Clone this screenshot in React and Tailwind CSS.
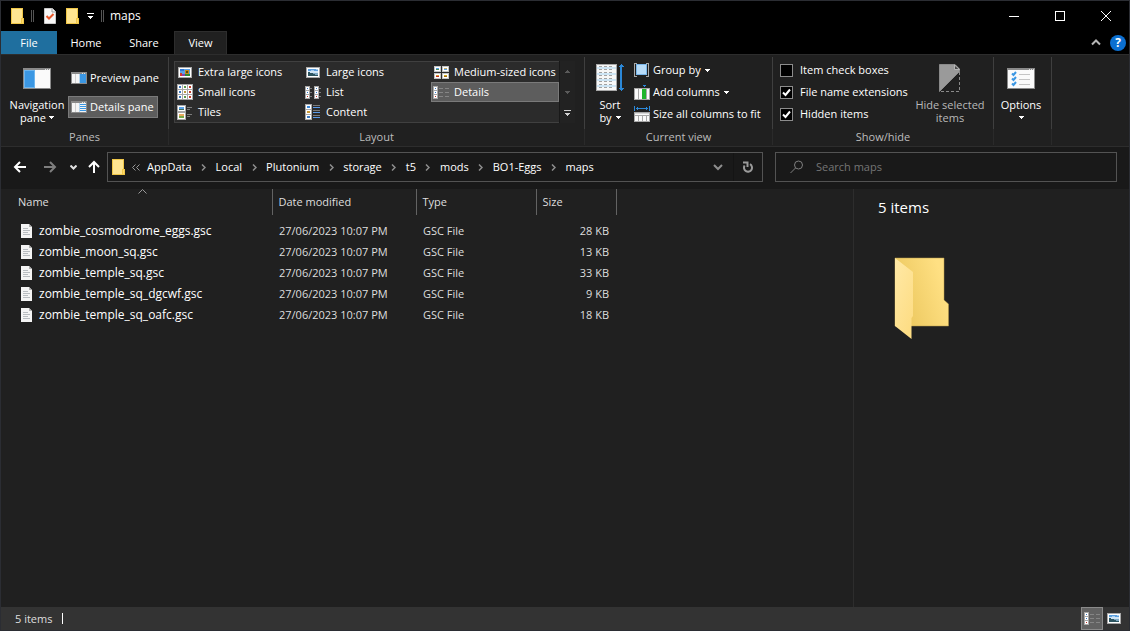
import React, { useState } from 'react'

const files = [
  { name: 'zombie_cosmodrome_eggs.gsc', date: '27/06/2023 10:07 PM', type: 'GSC File', size: '28 KB' },
  { name: 'zombie_moon_sq.gsc', date: '27/06/2023 10:07 PM', type: 'GSC File', size: '13 KB' },
  { name: 'zombie_temple_sq.gsc', date: '27/06/2023 10:07 PM', type: 'GSC File', size: '33 KB' },
  { name: 'zombie_temple_sq_dgcwf.gsc', date: '27/06/2023 10:07 PM', type: 'GSC File', size: '9 KB' },
  { name: 'zombie_temple_sq_oafc.gsc', date: '27/06/2023 10:07 PM', type: 'GSC File', size: '18 KB' },
]

const crumbs = ['AppData', 'Local', 'Plutonium', 'storage', 't5', 'mods', 'BO1-Eggs', 'maps']

/* ---------- icons ---------- */

function Icon({ w = 16, h = 16, crisp = true, className = '', children }) {
  return (
    <svg
      width={w}
      height={h}
      viewBox={`0 0 ${w} ${h}`}
      fill="none"
      shapeRendering={crisp ? 'crispEdges' : 'auto'}
      className={`shrink-0 ${className}`}
      aria-hidden="true"
    >
      {children}
    </svg>
  )
}

function FolderIcon() {
  return (
    <Icon w={13} h={16}>
      <rect x="0" y="0" width="12" height="16" fill="#ffe591" />
      <path d="M0.5 0v15.5H12.5V10.5H10.5V15M0 0.5H11.5V10" stroke="#f0c748" />
      <rect x="11" y="11" width="1" height="4" fill="#ffd869" />
    </Icon>
  )
}

function PropertiesIcon() {
  return (
    <Icon w={12} h={16} crisp={false}>
      <path d="M0.5 0.5H8.5L11.5 3.5V15.5H0.5Z" fill="#f7f7f7" stroke="#c9c9c9" />
      <path d="M8 0.5V4H11.5" stroke="#9a9a9a" />
      <path d="M2.5 8L5 10.5L9.5 6" stroke="#e8572a" strokeWidth="2" />
    </Icon>
  )
}

function NavPaneIcon() {
  return (
    <Icon w={28} h={21}>
      <rect x="0.5" y="0.5" width="27" height="20" fill="#fafafa" stroke="#8a8a8a" />
      <rect x="1" y="1" width="26" height="1" fill="#8a8a8a" />
      <path d="M22 1.5H23M24 1.5H25M26 1.5H27" stroke="#e0e0e0" />
      <rect x="1" y="2" width="11" height="18" fill="#3b97e3" />
      <rect x="1.5" y="2.5" width="10" height="17" stroke="#6db5ee" />
    </Icon>
  )
}

function PaneIcon({ details }) {
  return (
    <Icon w={16} h={12}>
      <rect x="0.5" y="0.5" width="15" height="11" fill="#f5f5f5" stroke="#8a8a8a" />
      <rect x="1" y="1" width="14" height="1" fill="#8a8a8a" />
      <path d="M11 1.5H12M13 1.5H14" stroke="#e0e0e0" />
      <rect x="4" y="2" width="1" height="9" fill="#d0d0d0" />
      <rect x="9" y="2" width="6" height="9" fill={details ? '#f5f5f5' : '#3b97e3'} />
      {details && <path d="M9 3.5H15M9 5.5H15M9 7.5H15M9 9.5H15" stroke="#3b97e3" />}
      <rect x="8" y="2" width="1" height="9" fill="#b5d6f0" />
    </Icon>
  )
}

function PhotoIcon({ colorful }) {
  return (
    <Icon w={14} h={11}>
      <rect x="0.5" y="0.5" width="13" height="10" fill="#ffffff" stroke="#a8a8a8" />
      {colorful ? (
        <>
          <rect x="2" y="2" width="10" height="7" fill="#5aa2e8" />
          <rect x="2" y="2" width="4" height="2" fill="#2f78d8" />
          <rect x="7" y="3" width="4" height="4" fill="#c98a1c" />
          <rect x="8" y="4" width="2" height="2" fill="#5a4a10" />
          <rect x="2" y="6" width="2" height="3" fill="#d43a2a" />
          <rect x="4" y="7" width="3" height="2" fill="#8a3fb0" />
          <rect x="7" y="7" width="5" height="2" fill="#2e8a35" />
        </>
      ) : (
        <>
          <rect x="2" y="2" width="10" height="2" fill="#5b9fdf" />
          <path d="M5 3.5H8M10 2.5H12" stroke="#a9cff0" />
          <rect x="2" y="4" width="10" height="2" fill="#cfe4f5" />
          <rect x="2" y="6" width="10" height="2" fill="#7fa9c4" />
          <path d="M2 5H4V6H7V7H9V8H12V9H2Z" fill="#2d5560" />
        </>
      )}
    </Icon>
  )
}

function SmallIconsIcon() {
  const colors = ['#3b78c0', '#5c9a4a', '#c03a2a', '#3b78c0', '#b89a40', '#c03a2a', '#3b78c0', '#5c9a4a', '#c03a2a']
  return (
    <Icon>
      <rect width="16" height="16" fill="#a8a8a8" />
      {colors.map((c, i) => {
        const x = 1 + (i % 3) * 5
        const y = 1 + Math.floor(i / 3) * 5
        return (
          <g key={i}>
            <rect x={x} y={y} width="4" height="4" fill="#fff" />
            <rect x={x + 1} y={y + 1} width="2" height="2" fill={c} />
          </g>
        )
      })}
    </Icon>
  )
}

function MediumIconsIcon() {
  const cells = [
    [0, 0, '#5aa2e8', '#4e8c5a'],
    [8, 0, '#c7b06a', '#5aa2e8'],
    [0, 7, '#e0a030', '#c0281e'],
    [8, 7, '#d8b020', '#a06a14'],
  ]
  return (
    <Icon w={15} h={13}>
      {cells.map(([x, y, a, b]) => (
        <g key={`${x}-${y}`}>
          <rect x={x + 0.5} y={y + 0.5} width="6" height="5" fill="#fff" stroke="#c4c4c4" />
          <rect x={x + 2} y={y + 2} width="3" height="1" fill={a} />
          <rect x={x + 2} y={y + 3} width="3" height="1" fill={b} />
        </g>
      ))}
    </Icon>
  )
}

function TilesIcon() {
  return (
    <Icon w={16} h={15}>
      <rect x="0.5" y="0.5" width="8" height="6" fill="#fff" stroke="#a8a8a8" />
      <rect x="2" y="2" width="5" height="2" fill="#5aa2e8" />
      <rect x="2" y="4" width="5" height="1" fill="#3d6b5c" />
      <rect x="0.5" y="7.5" width="8" height="7" fill="#fff" stroke="#a8a8a8" />
      <rect x="2" y="9" width="5" height="2" fill="#e8a860" />
      <rect x="2" y="11" width="5" height="2" fill="#78a848" />
      <path d="M10 2.5H15M10 4.5H13M10 9.5H15M10 11.5H13" stroke="#7c7c7c" />
    </Icon>
  )
}

function Strip({ x }) {
  return (
    <g>
      <rect x={x} y="0" width="5" height="13" fill="#a8a8a8" />
      <rect x={x + 1} y="1" width="3" height="3" fill="#fff" />
      <rect x={x + 1} y="5" width="3" height="3" fill="#fff" />
      <rect x={x + 1} y="9" width="3" height="3" fill="#fff" />
      <rect x={x + 2} y="2" width="1" height="1" fill="#3b78c0" />
      <rect x={x + 2} y="6" width="1" height="1" fill="#2b78d0" />
      <rect x={x + 2} y="10" width="1" height="1" fill="#c0281e" />
    </g>
  )
}

function ListIcon() {
  return (
    <Icon w={16} h={13}>
      <Strip x={0} />
      <Strip x={9} />
      <path d="M5 2.5H7M5 6.5H7M5 10.5H7M14 2.5H16M14 6.5H16M14 10.5H16" stroke="#7c7c7c" />
    </Icon>
  )
}

function DetailsIcon() {
  return (
    <Icon w={16} h={13}>
      <Strip x={0} />
      <path d="M6 2.5H10M12 2.5H16M6 6.5H10M12 6.5H16M6 10.5H10M12 10.5H16" stroke="#858585" />
    </Icon>
  )
}

function ContentIcon() {
  return (
    <Icon w={16} h={16}>
      <rect x="0" y="0" width="7" height="16" fill="#a8a8a8" />
      <path d="M1 3H6M1 8H6M1 13H6" stroke="#fff" strokeWidth="4" />
      <rect x="2" y="2" width="3" height="2" fill="#3b88d8" />
      <rect x="2" y="7" width="3" height="2" fill="#c89838" />
      <rect x="2" y="12" width="3" height="2" fill="#3b78c0" />
      <path d="M8 1.5H15M8 6.5H15M8 11.5H15" stroke="#7c7c7c" />
      <path d="M8 3.5H15M8 8.5H15M8 13.5H15" stroke="#5a9bea" />
    </Icon>
  )
}

function SortIcon() {
  return (
    <Icon w={28} h={28}>
      <rect x="0.5" y="0.5" width="20" height="26" fill="#f7f7f7" stroke="#a8a8a8" />
      <path d="M1 4H20M1 10H20M1 16H20M1 22H20" stroke="#cde5f5" strokeWidth="2" />
      <path
        d="M3 2.5H18M3 5.5H18M3 8.5H18M3 11.5H18M3 14.5H18M3 17.5H18M3 20.5H18M3 23.5H18"
        stroke="#a2a2a2"
        strokeDasharray="3 2"
      />
      <path d="M25 2V25" stroke="#2b88d8" strokeWidth="2" />
      <path d="M22 3H28L25 0ZM22 24H28L25 27Z" fill="#2b88d8" />
    </Icon>
  )
}

function GroupIcon() {
  return (
    <Icon w={15} h={14}>
      <path d="M3 0.5H0.5V13.5H3M12 0.5H14.5V13.5H12" stroke="#a8a8a8" />
      <rect x="2.5" y="1.5" width="10" height="10" fill="#b8dcf8" stroke="#79b6ea" />
    </Icon>
  )
}

function AddColumnsIcon() {
  return (
    <Icon w={16} h={15}>
      <path d="M8 0H13L10.5 2Z" fill="#2b88d8" />
      <rect x="0.5" y="3.5" width="15" height="11" fill="#fafafa" stroke="#a8a8a8" />
      <path d="M4.5 4V14M12.5 4V14" stroke="#a8a8a8" />
      <rect x="8" y="4" width="4" height="10" fill="#1fb52c" />
    </Icon>
  )
}

function SizeColumnsIcon() {
  return (
    <Icon w={16} h={16}>
      <path d="M0.5 0V5M15.5 0V5M2 2.5H14M3.5 1V4M12.5 1V4" stroke="#2b88d8" />
      <rect x="0.5" y="6.5" width="15" height="9" fill="#fafafa" stroke="#a8a8a8" />
      <path d="M1 9.5H15" stroke="#a8a8a8" />
      <path d="M1 7.5H15" stroke="#d8d8d8" />
      <path d="M4.5 9V15M8.5 9V15M12.5 9V15" stroke="#a8a8a8" />
    </Icon>
  )
}

function HideItemsIcon() {
  return (
    <Icon w={22} h={28} crisp={false}>
      <path d="M0.5 0.5H16L20.5 5V7.5L0.5 27.5Z" fill="#9a9a9a" stroke="#8a8a8a" />
      <path d="M15.5 1V5.5H20.5Z" fill="#4a4a4a" stroke="#b5b5b5" />
      <path d="M20.5 8V27.5H1" stroke="#8a8a8a" strokeDasharray="3 2" />
    </Icon>
  )
}

function OptionsIcon() {
  return (
    <Icon w={28} h={21} crisp={false}>
      <rect x="0.5" y="0.5" width="27" height="20" fill="#fafafa" stroke="#8a8a8a" />
      <rect x="1" y="1" width="26" height="1" fill="#8a8a8a" />
      <path d="M22 1.5H23M24 1.5H25M26 1.5H27" stroke="#e0e0e0" />
      <path d="M5 5.5L6.5 7L9 4M5 10.5L6.5 12L9 9M5 15.5L6.5 17L9 14" stroke="#3b97e3" strokeWidth="2" />
      <path d="M12 6.5H23M12 11.5H23M12 16.5H23" stroke="#c4c4c4" />
    </Icon>
  )
}

function Caret({ className = '' }) {
  return (
    <Icon w={5} h={3} className={className}>
      <path d="M0 0H5V1H4V2H3V3H2V2H1V1H0Z" fill="currentColor" />
    </Icon>
  )
}

function FileIcon() {
  return (
    <Icon w={11} h={14} crisp={false}>
      <path d="M0 0H8L11 3V14H0Z" fill="#f4f4f4" />
      <path d="M8 0V3H11Z" fill="#b0b0b0" />
      <path d="M2 4.5H7M2 6.5H9M2 8.5H7M2 10.5H9" stroke="#b8bcc0" />
    </Icon>
  )
}

function OpenFolderIcon() {
  return (
    <Icon w={56} h={84} crisp={false}>
      <defs>
        <linearGradient id="back" x1="0" y1="1" x2="1" y2="0.6">
          <stop offset="0.2" stopColor="#ecc85f" />
          <stop offset="1" stopColor="#ffe083" />
        </linearGradient>
        <linearGradient id="front" x1="0" y1="0" x2="0.6" y2="1">
          <stop offset="0" stopColor="#ffe9a6" />
          <stop offset="1" stopColor="#fddd85" />
        </linearGradient>
      </defs>
      <path d="M1 1H50V43L54.5 47V69H1Z" fill="url(#back)" stroke="#b79a4a" strokeWidth="0.5" />
      <path d="M1 1L19 15V59L17.5 61V82L1 69Z" fill="url(#front)" />
    </Icon>
  )
}

/* ---------- ribbon ---------- */

function Group({ label, className = '', children }) {
  return (
    <section className={`flex flex-col h-[88px] ${className}`}>
      <div className="flex-1 flex border-r border-[#3f3f3f]">{children}</div>
      <div className="h-4 text-center leading-4 text-[#bdbdbd] border-r border-[#2a2a2a]">{label}</div>
    </section>
  )
}

function BigButton({ icon, className = '', children }) {
  return (
    <button className={`flex flex-col items-center leading-[13px] ${className}`}>
      <span className="h-[34px] flex items-center mb-[3px]">{icon}</span>
      {children}
    </button>
  )
}

function RibbonRow({ icon, caret, children }) {
  return (
    <button className="flex items-center h-[22px] whitespace-nowrap">
      <span className="w-[19px]">{icon}</span>
      {children}
      {caret && <Caret className="ml-1" />}
    </button>
  )
}

function CheckRow({ label, initial }) {
  const [checked, setChecked] = useState(initial)
  return (
    <label className="flex items-center h-[22px] whitespace-nowrap">
      <span className="grid mr-[7px]">
        <input
          type="checkbox"
          checked={checked}
          onChange={(e) => setChecked(e.target.checked)}
          className="appearance-none col-start-1 row-start-1 w-[13px] h-[13px] bg-black border border-[#8c8c8c]"
        />
        {checked && (
          <Icon w={13} h={13} crisp={false} className="col-start-1 row-start-1 pointer-events-none">
            <path d="M3 6.5L5.5 9L10 3.5" stroke="#fff" strokeWidth="2" />
          </Icon>
        )}
      </span>
      {label}
    </label>
  )
}

const layouts = [
  { label: 'Extra large icons', icon: <PhotoIcon colorful /> },
  { label: 'Large icons', icon: <PhotoIcon /> },
  { label: 'Medium-sized icons', icon: <MediumIconsIcon /> },
  { label: 'Small icons', icon: <SmallIconsIcon /> },
  { label: 'List', icon: <ListIcon /> },
  { label: 'Details', icon: <DetailsIcon /> },
  { label: 'Tiles', icon: <TilesIcon /> },
  { label: 'Content', icon: <ContentIcon /> },
]

function Ribbon() {
  const [layout, setLayout] = useState('Details')

  return (
    <div className="flex bg-[#202020] border-y border-[#2d2d2d] h-[93px] pt-[2px] overflow-hidden">
      <Group label="Panes" className="w-[168px]">
        <BigButton icon={<NavPaneIcon />} className="w-[58px] ml-[7px] pt-1">
          <span>Navigation</span>
          <span className="flex items-center gap-[3px]">pane<Caret /></span>
        </BigButton>
        <div className="flex flex-col gap-[7px] pt-[10px] ml-[2px]">
          <button className="flex items-center gap-[3px] h-[22px] w-[90px] border border-transparent px-[2px] whitespace-nowrap">
            <PaneIcon />
            Preview pane
          </button>
          <button className="flex items-center gap-[3px] h-[22px] w-[90px] border border-[#7a7a7a] bg-[#5d5d5d] px-[2px] whitespace-nowrap">
            <PaneIcon details />
            Details pane
          </button>
        </div>
      </Group>

      <Group label="Layout" className="w-[416px]">
        <div className="flex mt-1 ml-[5px] h-[62px] w-[401px]">
          <div className="grid grid-cols-3 grid-rows-3 w-[385px] bg-[#2b2b2b] border border-r-0 border-[#404040]">
            {layouts.map((l) => (
              <button
                key={l.label}
                onClick={() => setLayout(l.label)}
                className={`flex items-center h-5 border pl-[1px] whitespace-nowrap ${
                  l.label === layout ? 'bg-[#5d5d5d] border-[#7a7a7a]' : 'border-transparent'
                }`}
              >
                <span className="w-4 mr-[5px] flex justify-center">{l.icon}</span>
                {l.label}
              </button>
            ))}
          </div>
          <div className="flex flex-col w-4 bg-[#222222] border-l border-[#191919]">
            <button aria-label="Scroll up" className="flex-1 flex items-center justify-center text-[#5a5a5a]">
              <Caret className="rotate-180" />
            </button>
            <button aria-label="Scroll down" className="flex-1 flex items-center justify-center text-[#5a5a5a]">
              <Caret />
            </button>
            <button aria-label="More layouts" className="flex-1 flex flex-col gap-[2px] items-center justify-center text-[#d0d0d0]">
              <span className="w-[7px] h-px bg-[#d0d0d0]" />
              <Caret />
            </button>
          </div>
        </div>
      </Group>

      <Group label="Current view" className="w-[188px]">
        <BigButton icon={<SortIcon />} className="w-[48px] ml-[1px] pt-1">
          <span>Sort</span>
          <span className="flex items-center gap-1">by<Caret /></span>
        </BigButton>
        <div className="flex flex-col pt-[2px]">
          <RibbonRow icon={<GroupIcon />} caret>Group by</RibbonRow>
          <RibbonRow icon={<AddColumnsIcon />} caret>Add columns</RibbonRow>
          <RibbonRow icon={<SizeColumnsIcon />}>Size all columns to fit</RibbonRow>
        </div>
      </Group>

      <Group label="Show/hide" className="w-[221px]">
        <div className="flex flex-col pt-[2px] ml-[7px] w-[130px]">
          <CheckRow label="Item check boxes" initial={false} />
          <CheckRow label="File name extensions" initial={true} />
          <CheckRow label="Hidden items" initial={true} />
        </div>
        <BigButton icon={<HideItemsIcon />} className="w-20 pt-1 text-[#b8b8b8]">
          <span className="whitespace-nowrap">Hide selected</span>
          <span>items</span>
        </BigButton>
      </Group>

      <Group label="" className="w-[58px]">
        <BigButton icon={<OptionsIcon />} className="w-[54px] pt-1">
          <span>Options</span>
          <span className="h-[13px] flex items-center"><Caret /></span>
        </BigButton>
      </Group>
    </div>
  )
}

/* ---------- window ---------- */

function TitleBar() {
  return (
    <header className="flex items-center h-[30px] bg-black pl-[10px]">
      <FolderIcon />
      <span className="w-[3px] h-3 border-x border-[#555] ml-[7px] mr-[10px]" />
      <button aria-label="Properties"><PropertiesIcon /></button>
      <button aria-label="New folder" className="ml-[10px]"><FolderIcon /></button>
      <button aria-label="Customize toolbar" className="ml-2 flex flex-col items-center gap-[2px]">
        <span className="w-[7px] h-px bg-white" />
        <Caret />
      </button>
      <span className="w-[3px] h-3 border-x border-[#555] ml-[7px] mr-[6px]" />
      <h1 className="text-[12px]">maps</h1>
      <div className="ml-auto flex h-full">
        <button aria-label="Minimize" className="w-[46px] flex items-center justify-center">
          <Icon w={10} h={10}><path d="M0 5.5H10" stroke="#fff" /></Icon>
        </button>
        <button aria-label="Maximize" className="w-[46px] flex items-center justify-center">
          <Icon w={10} h={10}><rect x="0.5" y="0.5" width="9" height="9" stroke="#fff" /></Icon>
        </button>
        <button aria-label="Close" className="w-[46px] flex items-center justify-center">
          <Icon w={10} h={10} crisp={false}><path d="M0 0L10 10M10 0L0 10" stroke="#fff" /></Icon>
        </button>
      </div>
    </header>
  )
}

function Tabs() {
  return (
    <nav className="flex h-[23px] bg-black">
      <button className="w-14 bg-[#1f6f9f]">File</button>
      <button className="w-[58px]">Home</button>
      <button className="w-[58px]">Share</button>
      <button className="w-[53px] ml-[1px] bg-[#202020] border border-b-0 border-[#2d2d2d]">View</button>
      <div className="ml-auto flex items-center gap-[9px] pr-[3px]">
        <button aria-label="Collapse ribbon">
          <Icon w={10} h={7} crisp={false}><path d="M1 5.5L5 1.5L9 5.5" stroke="#b5b5b5" strokeWidth="2" /></Icon>
        </button>
        <button aria-label="Help" className="w-4 h-4 rounded-full bg-[#0b6fd0] text-[12px] font-bold leading-4">?</button>
      </div>
    </nav>
  )
}

function Arrow({ d, stroke = '#fff' }) {
  return (
    <Icon w={14} h={14} crisp={false}>
      <path d={d} stroke={stroke} strokeWidth="2" />
    </Icon>
  )
}

function AddressBar() {
  return (
    <div className="flex items-center h-[42px] bg-[#191919] pr-3 pb-[2px]">
      <div className="flex items-center w-[106px] pl-3">
        <button aria-label="Back"><Arrow d="M13 7H2M7 2L2 7L7 12" /></button>
        <button aria-label="Forward" className="ml-4"><Arrow d="M1 7H12M7 2L12 7L7 12" stroke="#7e7e7e" /></button>
        <button aria-label="Recent locations" className="ml-[13px]">
          <Icon w={7} h={5} crisp={false}><path d="M0.5 0.5L3.5 3.5L6.5 0.5" stroke="#e0e0e0" strokeWidth="2" /></Icon>
        </button>
        <button aria-label="Up" className="ml-[10px]"><Arrow d="M7 13V2M2 7L7 2L12 7" /></button>
      </div>
      <div className="flex items-center flex-1 h-[30px] border border-[#535353] pl-1">
        <FolderIcon />
        <span className="w-[22px] flex justify-center">
          <Icon w={8} h={7} crisp={false}>
            <path d="M3.5 0.5L0.5 3.5L3.5 6.5M7.5 0.5L4.5 3.5L7.5 6.5" stroke="#9a9a9a" />
          </Icon>
        </span>
        {crumbs.map((c, i) => (
          <React.Fragment key={c}>
            <button className="whitespace-nowrap">{c}</button>
            {i < crumbs.length - 1 && (
              <span className="w-6 flex justify-center">
                <Icon w={5} h={7} crisp={false}><path d="M1 0.5L4 3.5L1 6.5" stroke="#8e8e8e" strokeWidth="1.5" /></Icon>
              </span>
            )}
          </React.Fragment>
        ))}
        <button aria-label="Previous locations" className="ml-auto w-[30px] h-full flex items-center justify-center">
          <Icon w={10} h={7} crisp={false}><path d="M1 1L5 5L9 1" stroke="#8e8e8e" strokeWidth="2" /></Icon>
        </button>
        <button aria-label="Refresh" className="w-[29px] h-full flex items-center justify-center border-l border-[#141414]">
          <Icon w={12} h={12} crisp={false}>
            <path d="M8 3.2A4 4 0 1 1 2.6 4.6" stroke="#9a9a9a" strokeWidth="2" />
            <path d="M1 1.5H5.5V6" stroke="#9a9a9a" strokeWidth="2" />
          </Icon>
        </button>
      </div>
      <label className="flex items-center w-[342px] h-[30px] ml-3 border border-[#535353] pl-[14px]">
        <Icon w={14} h={14} crisp={false}>
          <circle cx="8.5" cy="5" r="4" stroke="#7e7e7e" />
          <path d="M5.5 8L0.5 13" stroke="#7e7e7e" />
        </Icon>
        <input
          type="text"
          aria-label="Search maps"
          placeholder="Search maps"
          className="flex-1 ml-3 bg-transparent outline-none placeholder:text-[#757575]"
        />
      </label>
    </div>
  )
}

function FileTable() {
  return (
    <table className="table-fixed w-[615px] border-collapse text-left">
      <colgroup>
        <col className="w-[271px]" />
        <col className="w-[144px]" />
        <col className="w-[120px]" />
        <col className="w-20" />
      </colgroup>
      <thead>
        <tr className="h-[26px] text-[#dedede]">
          <th className="relative font-normal pl-[17px] border-r border-[#636363]">
            Name
            <Icon w={9} h={5} crisp={false} className="absolute top-0 left-[137px]">
              <path d="M0.5 4.5L4.5 0.5L8.5 4.5" stroke="#9a9a9a" />
            </Icon>
          </th>
          <th className="font-normal pl-[6px] border-r border-[#636363]">Date modified</th>
          <th className="font-normal pl-[6px] border-r border-[#636363]">Type</th>
          <th className="font-normal pl-[6px] border-r border-[#636363]">Size</th>
        </tr>
      </thead>
      <tbody className="before:block before:h-[5px]">
        {files.map((f) => (
          <tr key={f.name} className="h-[21px] text-[#dedede]">
            <td className="pl-5 text-white text-[12px] leading-4">
              <span className="flex items-center gap-[7px]">
                <FileIcon />
                {f.name}
              </span>
            </td>
            <td className="pl-[7px]">{f.date}</td>
            <td className="pl-[7px]">{f.type}</td>
            <td className="pr-[7px] text-right">{f.size}</td>
          </tr>
        ))}
      </tbody>
    </table>
  )
}

function StatusBar() {
  return (
    <footer className="flex items-center h-[23px] bg-[#333333] pl-[14px]">
      <span className="text-[#dedede]">5 items</span>
      <span className="w-px h-[11px] bg-white ml-[10px]" />
      <div className="ml-auto flex h-full pr-1">
        <button aria-label="Details view" className="w-[22px] h-full flex items-center justify-center bg-[#626262] border border-[#8a8a8a]">
          <DetailsIcon />
        </button>
        <button aria-label="Large icons view" className="w-[22px] flex items-center justify-center">
          <PhotoIcon />
        </button>
      </div>
    </footer>
  )
}

export default function App() {
  return (
    <div className="min-h-screen flex flex-col bg-[#202020] text-white text-[11px] leading-4 border border-[#2b2d33] font-['Open_Sans','Noto_Sans',sans-serif]">
      <TitleBar />
      <Tabs />
      <Ribbon />
      <AddressBar />
      <div className="flex-1 flex">
        <main className="flex-1">
          <FileTable />
        </main>
        <aside className="w-[276px] border-l border-[#2d2d2d] pl-6 pt-2">
          <h2 className="text-[15px] leading-5">5 items</h2>
          <div className="mt-10 ml-4">
            <OpenFolderIcon />
          </div>
        </aside>
      </div>
      <StatusBar />
    </div>
  )
}
